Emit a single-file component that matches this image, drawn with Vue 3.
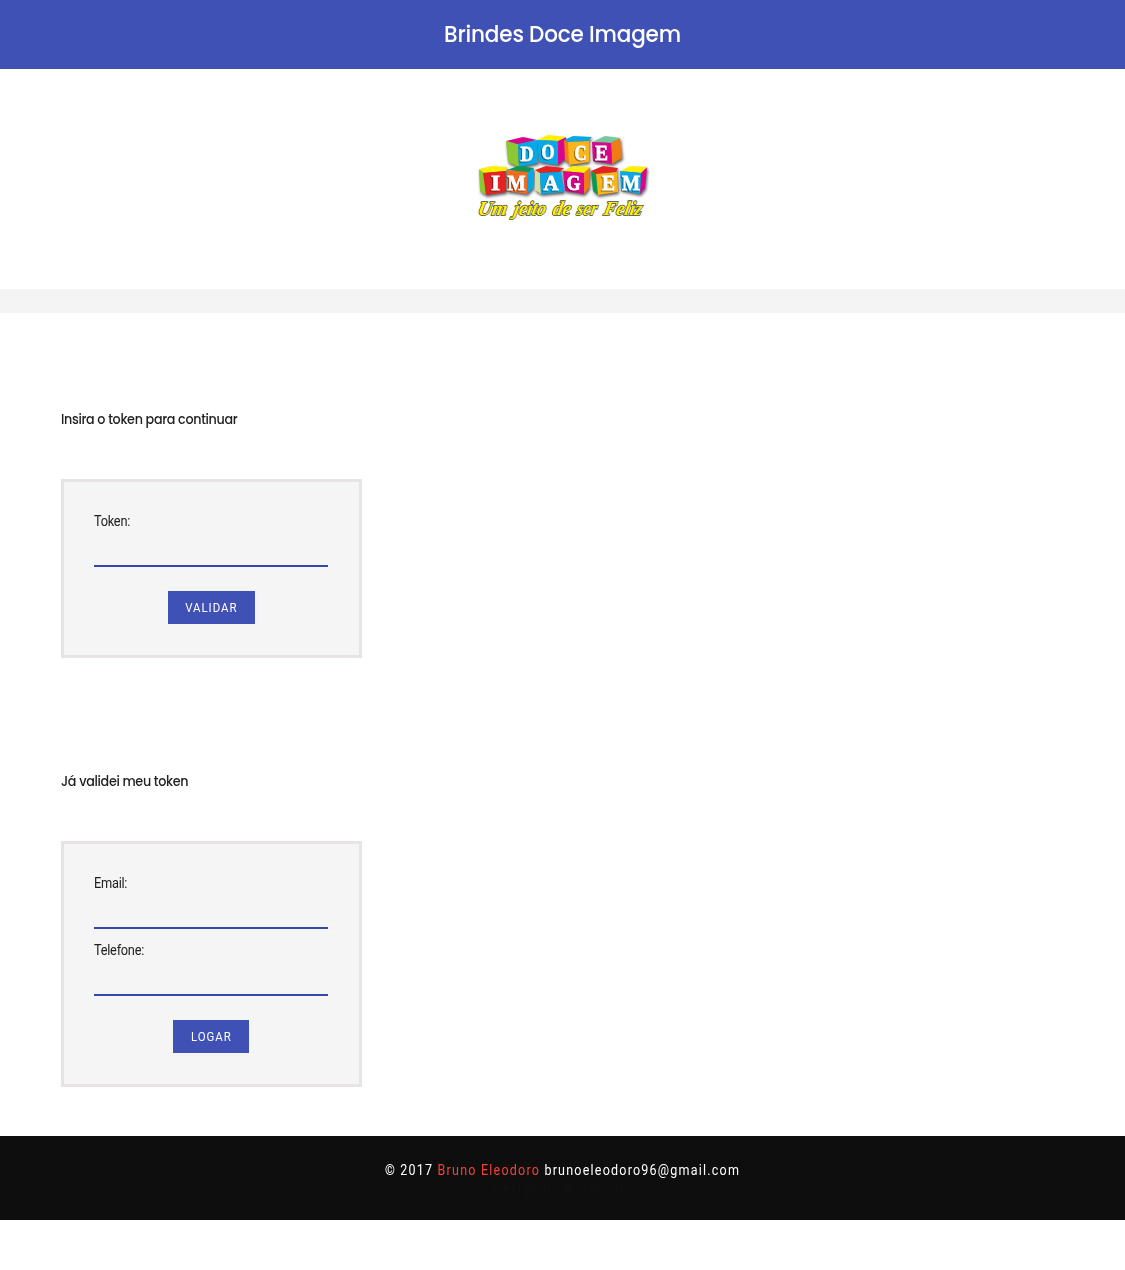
<script setup>
const cubes = [
  { ch: 'D', tx: 57, ty: 36, w: 13, top: '36,16 53,12 67,15 48,19', side: '36,16 48,19 49,42 38,37', front: '48,19 67,15 68,38 49,42', colors: ['#d9058c', '#8cc832', '#08a8e8'] },
  { ch: 'O', tx: 78, ty: 34, w: 13, top: '67,15 78,10 96,12 88,16', side: '88,16 96,12 95,34 88,40', front: '67,15 88,16 88,40 69,37', colors: ['#fff000', '#d9058c', '#08a8e8'] },
  { ch: 'C', tx: 110.5, ty: 35, w: 12, top: '94,15 103,11 122,12 118,16 99,17', side: '94,15 99,17 100,40 95,35', front: '98,17 119,16 119,37 99,40', colors: ['#08a8e8', '#ef7c16', '#fbb51c'] },
  { ch: 'E', tx: 131.5, ty: 35, w: 13, top: '122,17 135,11 150,13 141,18', side: '141,18 150,13 152,33 142,39', front: '122,17 141,18 142,39 123,36', colors: ['#76c99b', '#ef7c16', '#d9058c'] },
  { ch: 'I', tx: 25.5, ty: 65, w: 9, top: '9,44 22,41 37,42 36,46 14,48', side: '9,44 14,48 16,70 10,66', front: '13,48 36,46 36,67 16,70', colors: ['#fff000', '#8cc832', '#e52323'] },
  { ch: 'M', tx: 46.5, ty: 65, w: 18, top: '37,45 48,41 64,43 58,47', side: '58,47 64,43 63,63 57,69', front: '37,45 58,47 57,69 37,66', colors: ['#079b50', '#08a8e8', '#f16b22'] },
  { ch: 'A', tx: 81, ty: 65, w: 15, top: '65,45 76,41 94,43 89,47 70,48', side: '65,45 70,48 71,69 65,65', front: '70,48 91,47 94,67 71,69', colors: ['#e52323', '#cfe0a4', '#08a8e8'] },
  { ch: 'G', tx: 103.5, ty: 65, w: 14, top: '93,46 103,41 120,42 114,48', side: '114,48 120,42 119,63 114,69', front: '93,46 114,48 114,69 95,66', colors: ['#fff000', '#ef7c16', '#d9058c'] },
  { ch: 'E', tx: 138.5, ty: 65, w: 13, top: '121,46 133,41 148,43 146,47 126,49', side: '121,46 126,49 128,70 123,66', front: '126,49 147,47 148,67 128,70', colors: ['#e52323', '#079b50', '#fbb51c'] },
  { ch: 'M', tx: 161, ty: 65, w: 18, top: '150,46 160,41 177,42 171,48', side: '171,48 177,42 175,63 170,69', front: '150,46 171,48 170,69 151,65', colors: ['#fff000', '#d9058c', '#08a8e8'] }
]
const words = [
  { t: 'Um', x: 7, w: 29 },
  { t: 'jeito', x: 43, w: 32 },
  { t: 'de', x: 82, w: 18 },
  { t: 'ser', x: 106, w: 20 },
  { t: 'Feliz', x: 133, w: 38 }
]
</script>

<template>
  <div class="page">
    <header class="header"><h1>Brindes Doce Imagem</h1></header>
    <div class="banner">
      <svg class="logo" width="190" height="105" viewBox="0 0 190 105">
        <g class="cubes">
          <g v-for="(c, i) in cubes" :key="i">
            <polygon :points="c.side" :fill="c.colors[1]" />
            <polygon :points="c.top" :fill="c.colors[0]" />
            <polygon :points="c.front" :fill="c.colors[2]" />
          </g>
        </g>
        <text v-for="(c, i) in cubes" :key="'t' + i" class="letter" :x="c.tx" :y="c.ty" :textLength="c.w" lengthAdjust="spacingAndGlyphs">{{ c.ch }}</text>
        <g v-for="w in words" :key="w.t" :transform="`translate(${w.x} 89.5) skewX(-12)`">
          <text class="tagline" :textLength="w.w" lengthAdjust="spacingAndGlyphs">{{ w.t }}</text>
        </g>
      </svg>
    </div>
    <div class="strip"></div>
    <main class="content">
      <section class="block">
        <h2>Insira o token para continuar</h2>
        <form class="card" @submit.prevent>
          <label for="token">Token:</label>
          <input id="token" type="text" />
          <button class="validate"><span>VALIDAR</span></button>
        </form>
      </section>
      <section class="block second">
        <h2>Já validei meu token</h2>
        <form class="card" @submit.prevent>
          <label for="email">Email:</label>
          <input id="email" type="text" />
          <label for="phone">Telefone:</label>
          <input id="phone" type="text" />
          <button class="login"><span>LOGAR</span></button>
        </form>
      </section>
    </main>
    <footer class="footer">
      <p>© 2017 <a>Bruno Eleodoro</a> brunoeleodoro96@gmail.com</p>
      <p class="credit">Design by W3layouts</p>
    </footer>
  </div>
</template>

<style>
body { margin: 0; background: #fff; }
</style>

<style scoped>
.page { font-family: Roboto, sans-serif; font-size: 14px; color: #212121; }
.header { height: 68.6px; background: #3f51b5; text-align: center; }
h1 { margin: 0; font: 500 22.5px/69px Poppins, Inter, sans-serif; color: #fff; letter-spacing: -.2px; transform: scaleX(.958); }
.banner { height: 220.4px; box-sizing: border-box; padding-top: 56.4px; display: flex; justify-content: center; align-items: flex-start; }
.logo { display: block; margin-left: 5px; }
.cubes { filter: drop-shadow(1px 2px 1.5px rgba(0, 0, 0, .65)); }
.letter { font: bold 22px "Liberation Serif", serif; fill: #fff; stroke: #fff; stroke-width: .8px; text-anchor: middle; filter: drop-shadow(-1px 1px .5px rgba(0, 0, 0, .4)); }
.tagline { font: italic bold 20px "Liberation Serif", serif; fill: #fff200; stroke: #444; stroke-width: 1.5px; paint-order: stroke; }
.strip { height: 24.5px; background: #f4f4f4; }
.content { padding: 94.5px 61px 49px; }
.block { width: 301px; }
.second { margin-top: 112px; }
h2 { margin: 0 0 48px; height: 23px; font: 500 14px/23px Poppins, Inter, sans-serif; color: #212121; white-space: nowrap; letter-spacing: -.35px; transform: scaleX(.909); transform-origin: left; }
.card { box-sizing: border-box; width: 301px; padding: 30px 31px 31px 30px; border: 3px solid #e8e4e4; background: #f5f5f5; display: flex; flex-direction: column; align-items: center; }
label { align-self: stretch; height: 20px; line-height: 19px; font-size: 14px; letter-spacing: -.3px; transform: scaleX(.915); transform-origin: left; }
input { box-sizing: border-box; width: 234px; height: 35px; margin: 0 0 12px; padding: 0; border: 0; border-bottom: 2px solid #3447ad; background: transparent; outline: 0; }
button { height: 33px; margin: 12px 0 0; padding: 0; border: 0; background: #3f51b5; color: #fff; font: 12px/35px Roboto, sans-serif; letter-spacing: 1px; }
button span { display: inline-block; transform: scaleX(.955); }
.validate { width: 87px; margin-left: 1px; }
.login { width: 76px; }
.footer { height: 84.5px; box-sizing: border-box; padding-top: 25px; background: #0e0e0e; color: #fff; text-align: center; }
.footer p { margin: 0; font-size: 14px; line-height: 19px; letter-spacing: 1.35px; transform: scaleX(.895); }
.footer a { color: #f44336; }
.footer .credit { color: #121215; }
</style>
